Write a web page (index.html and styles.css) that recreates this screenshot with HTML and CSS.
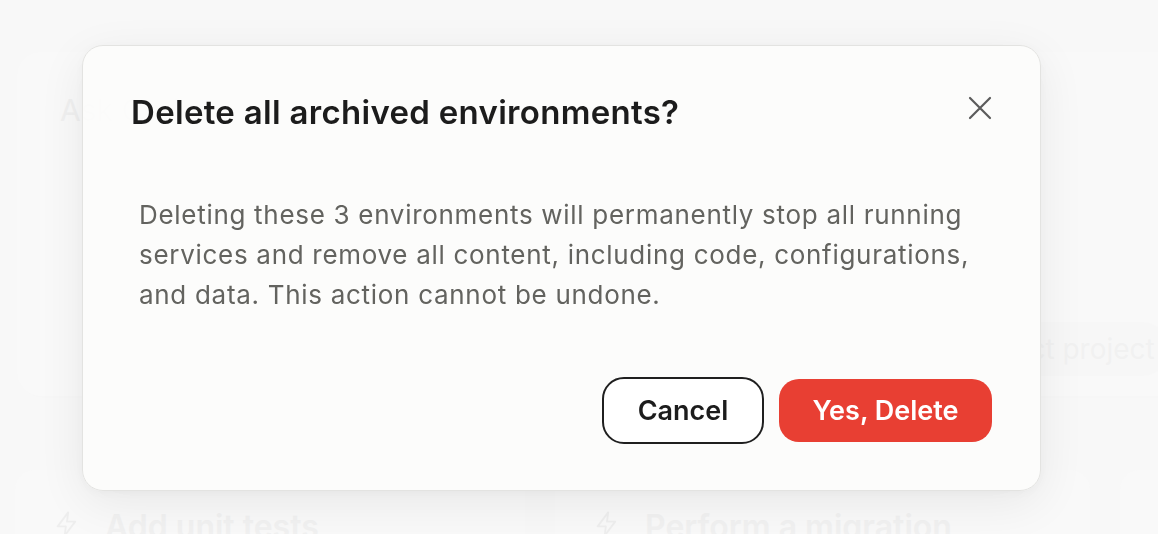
FILE: index.html
```html
<!DOCTYPE html>
<html lang="en">
<head>
<meta charset="utf-8">
<title>Delete archived environments</title>
<link rel="stylesheet" href="styles.css">
</head>
<body>
<div class="app">
  <div class="prompt-card">
    <div class="prompt-placeholder">Ask Codex</div>
    <div class="prompt-footer">
      <span class="project-pill">Select project</span>
    </div>
  </div>
  <div class="suggestions">
    <div class="suggestion">
      <svg class="bolt" viewBox="0 0 24 24" width="28" height="30"><path d="M13 2 4 14h7l-1 8 9-12h-7z" fill="none" stroke="currentColor" stroke-width="1.6" stroke-linejoin="round"/></svg>
      <span>Add unit tests</span>
    </div>
    <div class="suggestion">
      <svg class="bolt" viewBox="0 0 24 24" width="28" height="30"><path d="M13 2 4 14h7l-1 8 9-12h-7z" fill="none" stroke="currentColor" stroke-width="1.6" stroke-linejoin="round"/></svg>
      <span>Perform a migration</span>
    </div>
    <div class="suggestion">
      <svg class="bolt" viewBox="0 0 24 24" width="28" height="30"><path d="M13 2 4 14h7l-1 8 9-12h-7z" fill="none" stroke="currentColor" stroke-width="1.6" stroke-linejoin="round"/></svg>
      <span>Fix a bug</span>
    </div>
  </div>
</div>

<div class="overlay">
  <div class="dialog" role="dialog" aria-labelledby="dlg-title">
    <div class="dialog-head">
      <h2 id="dlg-title" class="dialog-title">Delete all archived environments?</h2>
      <button class="close-btn" aria-label="Close">
        <svg viewBox="0 0 24 24" width="24" height="24"><path d="M2 2 22 22M22 2 2 22" stroke="currentColor" stroke-width="2.2" stroke-linecap="round"/></svg>
      </button>
    </div>
    <p class="dialog-body">Deleting these 3 environments will permanently stop all running services and remove all content, including code, configurations, and data. This action cannot be undone.</p>
    <div class="dialog-actions">
      <button class="btn btn-cancel">Cancel</button>
      <button class="btn btn-danger">Yes, Delete</button>
    </div>
  </div>
</div>
</body>
</html>
```

FILE: styles.css
```css
* { box-sizing: border-box; }

html, body {
  margin: 0;
  height: 100%;
}

body {
  background: #f7f7f7;
  font-family: Inter, "Noto Sans", "Liberation Sans", sans-serif;
  overflow: hidden;
}

.app {
  padding: 52px 0 0 17px;
  display: flex;
  flex-direction: column;
  gap: 74px;
}

.prompt-card {
  width: 1180px;
  height: 344px;
  background: #f8f8f8;
  border-radius: 24px;
  box-shadow: 0 2px 16px rgba(0,0,0,0.015);
  display: flex;
  flex-direction: column;
  justify-content: space-between;
  padding: 40px 0 20px 43px;
}

.prompt-placeholder {
  font-size: 30px;
  color: #e6e6e6;
}

.prompt-footer {
  display: flex;
  justify-content: flex-start;
  padding-left: 898px;
}

.project-pill {
  font-size: 28px;
  color: #e8e8e8;
  padding: 10px 14px;
  border-radius: 30px;
  background: #f5f5f5;
}

.suggestions {
  display: flex;
  gap: 30px;
  margin-left: -2px;
}

.suggestion {
  flex: 0 0 auto;
  width: 510px;
  height: 120px;
  background: #f8f8f8;
  border-radius: 20px;
  display: flex;
  align-items: flex-start;
  gap: 24px;
  padding: 37px 0 0 38px;
  font-size: 32px;
  font-weight: 600;
  color: #e8e8e8;
}

.suggestion:nth-child(2) { width: 535px; }

.bolt { color: #e3e3e3; flex: 0 0 auto; margin-top: 2px; }

.overlay {
  position: fixed;
  inset: 0;
  background: rgba(250, 250, 250, 0.5);
}

.dialog {
  position: absolute;
  left: 82px;
  top: 45px;
  width: 959px;
  height: 446px;
  background: rgba(252, 252, 251, 0.93);
  border: 1px solid #e3e3e1;
  border-radius: 21px;
  box-shadow: 0 12px 48px rgba(0,0,0,0.07), 0 2px 8px rgba(0,0,0,0.03);
  padding: 44px 48px 46px 48px;
  display: flex;
  flex-direction: column;
}

.dialog-head {
  display: flex;
  justify-content: space-between;
  align-items: flex-start;
}

.dialog-title {
  margin: 0;
  font-size: 33px;
  line-height: 44px;
  font-weight: 600;
  color: #1c1c1c;
  letter-spacing: 0.3px;
}

.close-btn {
  border: 0;
  background: none;
  padding: 0;
  margin: 6px 0 0 0;
  width: 24px;
  height: 24px;
  color: #5b5b5b;
  cursor: pointer;
  display: flex;
}

.dialog-body {
  margin: 61px 0 0 8px;
  width: 840px;
  font-size: 26px;
  line-height: 40px;
  letter-spacing: 0.7px;
  color: #63635f;
}

.dialog-actions {
  margin-top: auto;
  display: flex;
  justify-content: flex-end;
  align-items: center;
  gap: 15px;
}

.btn {
  font-family: inherit;
  font-size: 27px;
  font-weight: 600;
  cursor: pointer;
}

.btn-cancel {
  width: 162px;
  height: 67px;
  border: 2px solid #1f1f1f;
  border-radius: 22px;
  background: #ffffff;
  color: #1c1c1c;
}

.btn-danger {
  width: 213px;
  height: 63px;
  border: 0;
  border-radius: 20px;
  background: #e83f33;
  color: #ffffff;
}
```
